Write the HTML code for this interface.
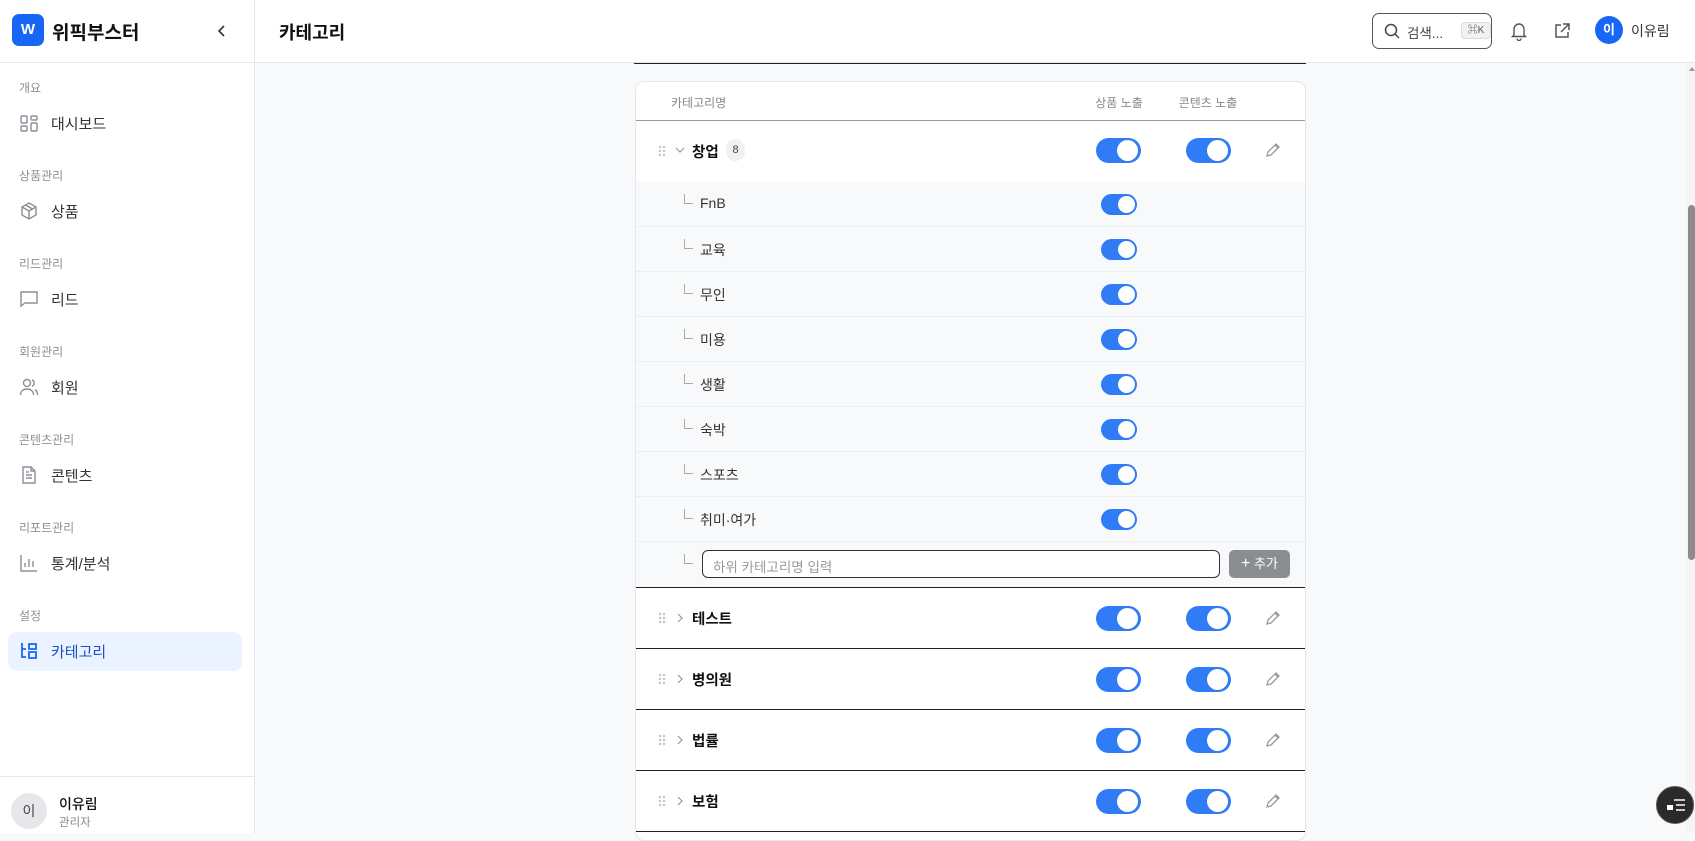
<!DOCTYPE html>
<html><head><meta charset="utf-8"><style>
*{margin:0;padding:0;box-sizing:border-box}
body{width:1695px;height:833px;overflow:hidden;background:#f8f9fb;font-family:"Liberation Sans","Noto Sans CJK KR",sans-serif;color:#111;position:relative}
.a{position:absolute}
.side{left:0;top:0;width:255px;height:833px;background:#fff;border-right:1px solid #e5e7eb}
.sec{left:19px;font-size:12px;color:#8b8f96}
.item{left:51px;font-size:15px;color:#333}
.ic{left:19px;width:20px;height:20px}
.hdr{left:255px;top:0;width:1440px;height:63px;background:#fff;border-bottom:1px solid #e5e7eb}
.card{left:635px;top:81px;width:671px;height:760px;background:#fff;border:1px solid #e3e6ea;border-radius:9px;overflow:hidden}
.tg{position:absolute;background:#2f7cf6;border-radius:14px}
.tg::after{content:"";position:absolute;background:#fff;border-radius:50%}
.tl{width:45px;height:25px}.tl::after{width:21px;height:21px;right:3px;top:2px}
.ts{width:36px;height:21px}.ts::after{width:17px;height:17px;right:2.5px;top:2px}
.crow{position:absolute;left:0;width:671px;height:45px;background:#f8f9fb;border-bottom:1px solid #eceef1}
.crow .l{position:absolute;left:48px;top:12px;width:9px;height:10px;border-left:1px solid #aaa;border-bottom:1px solid #aaa}
.crow .t{position:absolute;left:64px;top:13px;font-size:14px;color:#333}
.prow{position:absolute;left:0;width:671px;height:61px;border-bottom:1.5px solid #222;background:#fff}
.prow .t{position:absolute;left:56px;top:20px;font-size:14.5px;font-weight:bold}
.drag{position:absolute;left:22px;width:8px;height:12px;background-image:radial-gradient(circle,#c4c7cc 1.2px,transparent 1.4px);background-size:4px 4px}
</style></head><body>
<div class="a side">
 <div class="a" style="left:12px;top:14px;width:32px;height:32px;background:#1766f5;border-radius:7px;color:#fff;font-weight:bold;font-size:15px;text-align:center;line-height:32px">W</div>
 <div class="a" style="left:52px;top:18px;font-size:19px;font-weight:bold">위픽부스터</div>
 <svg class="a" style="left:216px;top:24px" width="12" height="14" viewBox="0 0 12 14"><path d="M8 2L3 7l5 5" stroke="#333" stroke-width="1.6" fill="none"/></svg>
 <div class="a" style="left:0;top:62px;width:254px;border-top:1px solid #e5e7eb"></div>
 <div class="a sec" style="top:79px">개요</div>
 <svg class="a ic" style="top:114px" viewBox="0 0 20 20" fill="none" stroke="#8b8f96" stroke-width="1.4"><rect x="2" y="2" width="6" height="7" rx="1"/><rect x="12" y="2" width="6" height="4" rx="1"/><rect x="2" y="12" width="6" height="5" rx="1"/><rect x="12" y="9" width="6" height="8" rx="1"/></svg>
 <div class="a item" style="top:113px">대시보드</div>
 <div class="a sec" style="top:167px">상품관리</div>
 <svg class="a ic" style="top:201px" viewBox="0 0 20 20" fill="none" stroke="#8b8f96" stroke-width="1.4"><path d="M10 2l7 4v8l-7 4-7-4V6z M3 6l7 4 7-4 M10 10v8 M6.5 4l7 4"/></svg>
 <div class="a item" style="top:201px">상품</div>
 <div class="a sec" style="top:255px">리드관리</div>
 <svg class="a ic" style="top:289px" viewBox="0 0 20 20" fill="none" stroke="#8b8f96" stroke-width="1.4"><path d="M2 3h16v11H6l-4 3z"/></svg>
 <div class="a item" style="top:289px">리드</div>
 <div class="a sec" style="top:343px">회원관리</div>
 <svg class="a ic" style="top:377px" viewBox="0 0 20 20" fill="none" stroke="#8b8f96" stroke-width="1.4"><circle cx="8" cy="6" r="3.5"/><path d="M1.5 18c0-4 3-6 6.5-6s6.5 2 6.5 6 M13 2.8a3.5 3.5 0 010 6.5 M16 12.5c1.5 1 2.5 3 2.5 5.5"/></svg>
 <div class="a item" style="top:377px">회원</div>
 <div class="a sec" style="top:431px">콘텐츠관리</div>
 <svg class="a ic" style="top:465px" viewBox="0 0 20 20" fill="none" stroke="#8b8f96" stroke-width="1.4"><path d="M4 2h8l4 4v12H4z M12 2v4h4 M7 10h6 M7 13h6 M7 7h3"/></svg>
 <div class="a item" style="top:465px">콘텐츠</div>
 <div class="a sec" style="top:519px">리포트관리</div>
 <svg class="a ic" style="top:553px" viewBox="0 0 20 20" fill="none" stroke="#8b8f96" stroke-width="1.4"><path d="M2 2v16h16 M6 14v-4 M10 14V6 M14 14v-6"/></svg>
 <div class="a item" style="top:553px">통계/분석</div>
 <div class="a sec" style="top:607px">설정</div>
 <div class="a" style="left:8px;top:632px;width:234px;height:39px;background:#eaf3ff;border-radius:9px"></div>
 <svg class="a ic" style="top:641px" viewBox="0 0 20 20" fill="none" stroke="#1766f5" stroke-width="1.8"><path d="M3 2v14h4 M3 8h4 M10 3h7v5h-7z M10 11h7v6h-7z"/></svg>
 <div class="a item" style="top:641px;color:#1d4fc4">카테고리</div>
 <div class="a" style="left:0;top:776px;width:254px;border-top:1px solid #e5e7eb"></div>
 <div class="a" style="left:11px;top:793px;width:36px;height:36px;border-radius:50%;background:#e5e7eb;text-align:center;line-height:36px;font-size:14px;color:#444">이</div>
 <div class="a" style="left:59px;top:794px;font-size:14px;font-weight:500">이유림</div>
 <div class="a" style="left:59px;top:814px;font-size:11.5px;color:#888">관리자</div>
</div>
<div class="a hdr">
 <div class="a" style="left:24px;top:19px;font-size:18px;font-weight:bold">카테고리</div>
 <div class="a" style="left:1117px;top:13px;width:120px;height:36px;border:1.3px solid #555;border-radius:7px"></div>
 <svg class="a" style="left:1128px;top:22px" width="18" height="18" viewBox="0 0 18 18" fill="none" stroke="#444" stroke-width="1.5"><circle cx="8" cy="8" r="5.5"/><path d="M12 12l4 4"/></svg>
 <div class="a" style="left:1152px;top:22px;font-size:13.5px;color:#444">검색...</div>
 <div class="a" style="left:1206px;top:22px;width:30px;height:17px;background:#f0f1f3;border:1px solid #ddd;border-radius:4px;font-size:10px;color:#555;text-align:center;line-height:15px">⌘K</div>
 <svg class="a" style="left:1255px;top:21px" width="18" height="20" viewBox="0 0 18 20" fill="none" stroke="#555" stroke-width="1.4"><path d="M4 14V8a5 5 0 0110 0v6l1.5 1.5h-13z M7 17.5a2 2 0 004 0"/></svg>
 <svg class="a" style="left:1298px;top:22px" width="18" height="18" viewBox="0 0 18 18" fill="none" stroke="#555" stroke-width="1.5"><path d="M8 3H3v12h12v-5 M10 2h6v6 M16 2L8 10"/></svg>
 <div class="a" style="left:1340px;top:16px;width:28px;height:28px;border-radius:50%;background:#1766f5;color:#fff;text-align:center;line-height:28px;font-size:13px;font-weight:bold">이</div>
 <div class="a" style="left:1376px;top:21px;font-size:14px;color:#333">이유림</div>
</div>
<div class="a" style="left:634px;top:63px;width:672px;border-top:1.5px solid #222"></div>
<div class="a card">
 <div class="a" style="left:35px;top:12px;font-size:12px;color:#888">카테고리명</div>
 <div class="a" style="left:448px;top:12px;font-size:12px;color:#888;width:70px;text-align:center">상품 노출</div>
 <div class="a" style="left:532px;top:12px;font-size:12px;color:#888;width:80px;text-align:center">콘텐츠 노출</div>
 <div class="a" style="left:0;top:38px;width:671px;border-top:1px solid #999"></div>
 <div class="prow" style="top:39px;border-bottom:none">
  <div class="drag" style="top:24px"></div>
  <svg class="a" style="left:39px;top:25px" width="10" height="8" viewBox="0 0 10 8"><path d="M1 2l4 4 4-4" stroke="#999" fill="none" stroke-width="1.2"/></svg>
  <div class="t">창업</div>
  <div class="a" style="left:90px;top:18px;width:19px;height:22px;border-radius:10px;background:#f0f1f3;font-size:11px;text-align:center;line-height:22px;color:#444">8</div>
  <div class="tg tl" style="left:460px;top:17px"></div>
  <div class="tg tl" style="left:550px;top:17px"></div>
  <svg class="a" style="left:628px;top:20px" width="18" height="18" viewBox="0 0 18 18" fill="none" stroke="#999" stroke-width="1.3"><path d="M3 15l1-4 8-8 3 3-8 8z M11 4l3 3"/></svg>
 </div>
 <div class="crow" style="top:100px"><div class="l"></div><div class="t">FnB</div><div class="tg ts" style="left:465px;top:12px"></div></div>
 <div class="crow" style="top:145px"><div class="l"></div><div class="t">교육</div><div class="tg ts" style="left:465px;top:12px"></div></div>
 <div class="crow" style="top:190px"><div class="l"></div><div class="t">무인</div><div class="tg ts" style="left:465px;top:12px"></div></div>
 <div class="crow" style="top:235px"><div class="l"></div><div class="t">미용</div><div class="tg ts" style="left:465px;top:12px"></div></div>
 <div class="crow" style="top:280px"><div class="l"></div><div class="t">생활</div><div class="tg ts" style="left:465px;top:12px"></div></div>
 <div class="crow" style="top:325px"><div class="l"></div><div class="t">숙박</div><div class="tg ts" style="left:465px;top:12px"></div></div>
 <div class="crow" style="top:370px"><div class="l"></div><div class="t">스포츠</div><div class="tg ts" style="left:465px;top:12px"></div></div>
 <div class="crow" style="top:415px"><div class="l"></div><div class="t">취미·여가</div><div class="tg ts" style="left:465px;top:12px"></div></div>
 <div class="crow" style="top:460px;height:46px;border-bottom:1.5px solid #222"><div class="l"></div>
  <div class="a" style="left:66px;top:8px;width:518px;height:28px;border:1.3px solid #333;border-radius:6px;background:#fff;font-size:13.5px;color:#999;padding:5px 10px">하위 카테고리명 입력</div>
  <div class="a" style="left:593px;top:8px;width:61px;height:28px;background:#8a8d92;border-radius:5px;color:#fff;font-size:13px;text-align:center;line-height:28px"><b style="font-size:16px;font-weight:normal">+</b> 추가</div>
 </div>
 <div class="prow" style="top:506px"><div class="drag" style="top:24px"></div><svg class="a" style="left:40px;top:25px" width="8" height="10" viewBox="0 0 8 10"><path d="M2 1l4 4-4 4" stroke="#999" fill="none" stroke-width="1.2"/></svg><div class="t">테스트</div><div class="tg tl" style="left:460px;top:18px"></div><div class="tg tl" style="left:550px;top:18px"></div><svg class="a" style="left:628px;top:21px" width="18" height="18" viewBox="0 0 18 18" fill="none" stroke="#999" stroke-width="1.3"><path d="M3 15l1-4 8-8 3 3-8 8z M11 4l3 3"/></svg></div>
 <div class="prow" style="top:567px"><div class="drag" style="top:24px"></div><svg class="a" style="left:40px;top:25px" width="8" height="10" viewBox="0 0 8 10"><path d="M2 1l4 4-4 4" stroke="#999" fill="none" stroke-width="1.2"/></svg><div class="t">병의원</div><div class="tg tl" style="left:460px;top:18px"></div><div class="tg tl" style="left:550px;top:18px"></div><svg class="a" style="left:628px;top:21px" width="18" height="18" viewBox="0 0 18 18" fill="none" stroke="#999" stroke-width="1.3"><path d="M3 15l1-4 8-8 3 3-8 8z M11 4l3 3"/></svg></div>
 <div class="prow" style="top:628px"><div class="drag" style="top:24px"></div><svg class="a" style="left:40px;top:25px" width="8" height="10" viewBox="0 0 8 10"><path d="M2 1l4 4-4 4" stroke="#999" fill="none" stroke-width="1.2"/></svg><div class="t">법률</div><div class="tg tl" style="left:460px;top:18px"></div><div class="tg tl" style="left:550px;top:18px"></div><svg class="a" style="left:628px;top:21px" width="18" height="18" viewBox="0 0 18 18" fill="none" stroke="#999" stroke-width="1.3"><path d="M3 15l1-4 8-8 3 3-8 8z M11 4l3 3"/></svg></div>
 <div class="prow" style="top:689px"><div class="drag" style="top:24px"></div><svg class="a" style="left:40px;top:25px" width="8" height="10" viewBox="0 0 8 10"><path d="M2 1l4 4-4 4" stroke="#999" fill="none" stroke-width="1.2"/></svg><div class="t">보험</div><div class="tg tl" style="left:460px;top:18px"></div><div class="tg tl" style="left:550px;top:18px"></div><svg class="a" style="left:628px;top:21px" width="18" height="18" viewBox="0 0 18 18" fill="none" stroke="#999" stroke-width="1.3"><path d="M3 15l1-4 8-8 3 3-8 8z M11 4l3 3"/></svg></div>
</div>
<div class="a" style="left:1686px;top:63px;width:9px;height:770px;background:#f5f5f5"></div>
<div class="a" style="left:1688px;top:205px;width:7px;height:355px;background:#8c8c8c;border-radius:4px"></div>
<div class="a" style="left:1689px;top:67px;width:0;height:0;border-left:3px solid transparent;border-right:3px solid transparent;border-bottom:4px solid #999"></div>
<div class="a" style="left:1656px;top:786px;width:38px;height:38px;border-radius:50%;background:#2a2a2a;border:1px solid #555"></div>
<svg class="a" style="left:1665px;top:797px" width="22" height="16" viewBox="0 0 22 16" fill="none" stroke="#fff" stroke-width="1.5"><path d="M9 3h11 M11 8h9 M11 13h9"/><rect x="2" y="8" width="6" height="5" fill="#fff" stroke="none"/></svg>
</body></html>
